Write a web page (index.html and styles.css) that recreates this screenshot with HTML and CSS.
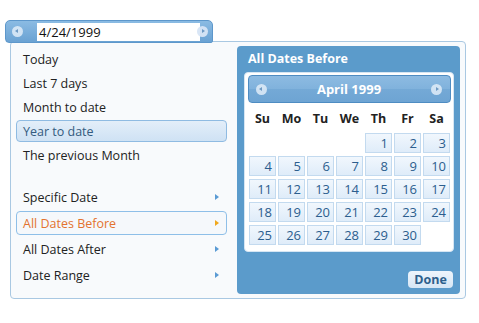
FILE: index.html
```html
<!DOCTYPE html>
<html>
<head>
<meta charset="utf-8">
<link rel="stylesheet" href="styles.css">
</head>
<body>
<div class="wrap">
  <div class="datebar">
    <span class="circ left"></span>
    <div class="input">4/24/1999</div>
    <span class="circ right"></span>
  </div>
  <div class="popup">
    <div class="list">
      <div class="item">Today</div>
      <div class="item">Last 7 days</div>
      <div class="item">Month to date</div>
      <div class="item sel">Year to date</div>
      <div class="item">The previous Month</div>
      <div class="sep"></div>
      <div class="item sub">Specific Date<span class="tri"></span></div>
      <div class="item sub active">All Dates Before<span class="tri"></span></div>
      <div class="item sub">All Dates After<span class="tri"></span></div>
      <div class="item sub">Date Range<span class="tri"></span></div>
    </div>
    <div class="panel">
      <div class="ptitle">All Dates Before</div>
      <div class="cal">
        <div class="calhead">
          <span class="circ left"></span>
          <span class="month">April 1999</span>
          <span class="circ right"></span>
        </div>
        <div class="dows">
          <span>Su</span><span>Mo</span><span>Tu</span><span>We</span><span>Th</span><span>Fr</span><span>Sa</span>
        </div>
        <div class="grid">
          <span class="empty"></span><span class="empty"></span><span class="empty"></span><span class="empty"></span>
          <span class="d">1</span><span class="d">2</span><span class="d">3</span>
          <span class="d">4</span><span class="d">5</span><span class="d">6</span><span class="d">7</span><span class="d">8</span><span class="d">9</span><span class="d">10</span>
          <span class="d">11</span><span class="d">12</span><span class="d">13</span><span class="d">14</span><span class="d">15</span><span class="d">16</span><span class="d">17</span>
          <span class="d">18</span><span class="d">19</span><span class="d">20</span><span class="d">21</span><span class="d">22</span><span class="d">23</span><span class="d">24</span>
          <span class="d">25</span><span class="d">26</span><span class="d">27</span><span class="d">28</span><span class="d">29</span><span class="d">30</span>
        </div>
      </div>
      <div class="foot"><button class="done">Done</button></div>
    </div>
  </div>
</div>
</body>
</html>
```

FILE: styles.css
```css
* { box-sizing: border-box; }
html, body { margin: 0; padding: 0; background: #ffffff; }
body { font-family: "Open Sans", "Noto Sans", sans-serif; font-size: 12px; color: #1e1e1e; }

.wrap { padding: 20px 0 0 5px; }

.datebar {
  position: relative;
  z-index: 2;
  width: 208px;
  height: 23px;
  background: linear-gradient(#8bbbe3, #6aa2d3);
  border: 1px solid #5d97cb;
  border-radius: 5px 5px 2px 4px;
  display: flex;
  align-items: center;
  padding: 0 4px 0 6px;
}
.datebar .input {
  flex: 1;
  height: 18px;
  margin: 0 -3px 0 14px;
  background: #fff;
  font-size: 13px;
  line-height: 18px;
  padding-left: 2px;
  color: #111;
}
.circ {
  position: relative;
  display: inline-block;
  width: 11px;
  height: 11px;
  border-radius: 50%;
  background: rgba(225, 236, 248, 0.85);
  flex: none;
}
.circ::after {
  content: "";
  position: absolute;
  top: 3px;
  border-top: 2.5px solid transparent;
  border-bottom: 2.5px solid transparent;
}
.circ.left::after { left: 3px; border-right: 3px solid #6e9ac4; }
.circ.right::after { left: 5px; border-left: 3px solid #6e9ac4; }
.datebar .circ.right { position: relative; z-index: 1; background: rgba(215, 229, 245, 0.95); }

.popup {
  margin: -2px 0 0 5px;
  width: 456px;
  height: 258px;
  border: 1px solid #a9c8e2;
  border-radius: 4px;
  background: #f8fafc;
  display: flex;
  padding: 4px 5px 4px 5px;
}

.list { width: 221px; padding-top: 2px; flex: none; }
.item {
  position: relative;
  height: 22px;
  margin-bottom: 2px;
  line-height: 22px;
  padding-left: 6px;
  width: 211px;
  border: 1px solid transparent;
  border-radius: 4px;
  font-size: 12.5px;
  color: #222;
}
.item.sel {
  background: linear-gradient(#e3eef9, #cfe2f4);
  border-color: #8fbbe2;
  color: #345b80;
}
.sep { height: 17px; }
.item.sub { height: 24px; line-height: 23px; }
.item.active {
  background: #f5f8fb;
  border-color: #8ebfe8;
  color: #e3732f;
}
.tri {
  position: absolute;
  left: 198px;
  top: 8px;
  border-top: 3.5px solid transparent;
  border-bottom: 3.5px solid transparent;
  border-left: 4px solid #5a9bd4;
}
.item.active .tri { border-left-color: #f0a81c; }

.panel {
  width: 223px;
  background: #5b9bcb;
  border-radius: 4px;
  padding: 4px 6px 6px 7px;
  display: flex;
  flex-direction: column;
}
.ptitle {
  color: #fff;
  font-weight: bold;
  font-size: 12.5px;
  line-height: 18px;
  padding: 0 0 4px 4px;
}
.cal {
  background: #fff;
  border: 1px solid #d6e6f3;
  border-radius: 4px;
  padding: 2px 2px 5px 3px;
  height: 180px;
}
.calhead {
  height: 28px;
  border-radius: 4px;
  border: 1px solid #4e8cc2;
  background: linear-gradient(#8dbbe2 0%, #80b2dc 50%, #74a9d6 51%, #6ea4d3 100%);
  display: flex;
  align-items: center;
  padding: 0 8px 0 7px;
}
.calhead .month {
  flex: 1;
  text-align: center;
  color: #fff;
  font-weight: bold;
  font-size: 13px;
}
.dows {
  display: grid;
  grid-template-columns: repeat(7, 27px);
  column-gap: 2px;
  padding: 0 0 0 1px;
  height: 30px;
  align-items: center;
}
.dows span {
  text-align: center;
  font-weight: bold;
  font-size: 12.5px;
  color: #222;
}
.grid {
  display: grid;
  grid-template-columns: repeat(7, 27px);
  grid-auto-rows: 20px;
  gap: 3px 2px;
  padding-left: 1px;
}
.grid .d {
  border: 1px solid #c3daef;
  background: linear-gradient(#f1f7fd, #dfecf9);
  color: #2c5e8e;
  font-size: 13px;
  line-height: 18px;
  text-align: right;
  padding-right: 3px;
}
.foot {
  flex: 1;
  display: flex;
  justify-content: flex-end;
  align-items: flex-end;
}
.done {
  font-family: inherit;
  width: 45px;
  height: 17px;
  border: none;
  border-radius: 4px;
  background: linear-gradient(#eef5fc, #d6e6f5);
  color: #2d5f8c;
  font-weight: bold;
  font-size: 12.5px;
  line-height: 17px;
  padding: 0;
  margin-right: 1px;
  margin-bottom: 0;
}
```
